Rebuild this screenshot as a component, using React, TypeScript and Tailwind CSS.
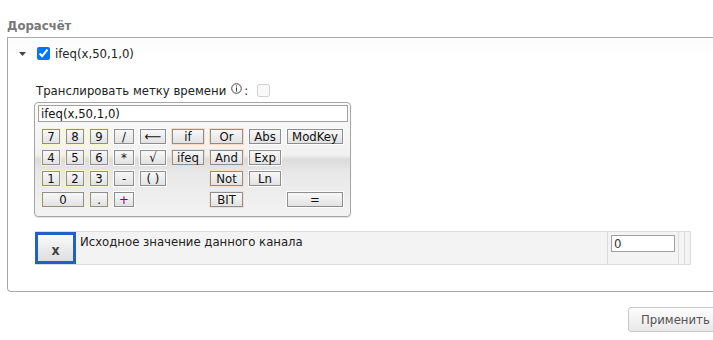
import React from "react";

const FONT = { fontFamily: '"DejaVu Sans Condensed", "Liberation Sans", Arial, sans-serif' };

type Frame = "y" | "p" | "w";

function Btn({
  label,
  frame,
  pos,
  textCls = "text-[#111]",
}: {
  label: string;
  frame: Frame;
  pos: string;
  textCls?: string;
}) {
  const frameCls =
    frame === "y" ? "bg-[#fbf5c6]" : frame === "p" ? "bg-[#f9dcc4]" : "bg-[#fdfdfd]";
  return (
    <div className={`${pos} ${frameCls} p-px h-[17px]`}>
      <div
        className={`h-full border border-[#8e8e8e] bg-gradient-to-b from-[#f8f8f8] to-[#e2e2e2] flex items-center justify-center text-[13px] leading-none ${textCls}`}
      >
        {label}
      </div>
    </div>
  );
}

export default function App() {
  return (
    <div style={FONT} className="w-[713px] h-[340px] bg-white overflow-hidden text-[13px] text-[#222]">
      <div className="pt-[18px] pl-[7px] h-[33px] leading-[15px] font-bold text-[#777]">Дорасчёт</div>
      <div className="ml-[7px] mt-[4px] w-[720px] border-l border-t border-b border-[#a9a9a9] rounded-bl-[4px] bg-gradient-to-b from-[#fbfbfb] to-white to-[20px]">
        {/* row 1 */}
        <div className="mt-[7px] h-[17px] flex items-center">
          <svg width="7" height="4" viewBox="0 0 7 4" className="ml-[11px]">
            <path d="M0 0 L7 0 L3.5 4 Z" fill="#444" />
          </svg>
          <input type="checkbox" defaultChecked className="ml-[11px] m-0 w-[13px] h-[13px] accent-[#0075ff]" />
          <span className="ml-[5px] leading-[17px]">ifeq(x,50,1,0)</span>
        </div>
        {/* row 2 */}
        <div className="mt-[20px] h-[17px] flex items-center pl-[28px]">
          <span className="leading-[17px]">Транслировать метку времени</span>
          <svg width="11" height="11" viewBox="0 0 11 11" className="ml-[5px] -mt-[5px]">
            <circle cx="5.5" cy="5.5" r="4.8" fill="none" stroke="#333" strokeWidth="0.9" />
            <rect x="5" y="2.4" width="1" height="1.1" fill="#333" />
            <rect x="5" y="4.4" width="1" height="4.2" fill="#333" />
          </svg>
          <span className="ml-[2px]">:</span>
          <input type="checkbox" disabled className="ml-[9px] m-0 w-[13px] h-[13px]" />
        </div>
        {/* calculator */}
        <div className="mt-[3px] ml-[26px] w-[317px] h-[115px] border border-[#a6a6a6] rounded-[4px] pl-[3px] pt-[2px] bg-[linear-gradient(to_bottom,#fbfbfb_0%,#f1f1f1_46%,#dcdcdc_50%,#e8e8e8_62%,#f3f3f3_100%)] shadow-[0_1px_1px_rgba(0,0,0,0.12)]">
          <div className="w-[310px] h-[17px] border border-[#a0a0a0] bg-white pl-[2px] leading-[15px] text-[13px] text-[#111]">
            ifeq(x,50,1,0)
          </div>
          <div className="mt-[6px] ml-[3px] grid grid-cols-[20px_20px_20px_22px_28px_34px_35px_34px_58px] grid-rows-[17px_17px_17px_17px] gap-x-[4px] gap-y-[4px]">
            <Btn label="7" frame="y" pos="col-start-1 row-start-1" />
            <Btn label="8" frame="y" pos="col-start-2 row-start-1" />
            <Btn label="9" frame="y" pos="col-start-3 row-start-1" />
            <Btn label="/" frame="w" pos="col-start-4 row-start-1" />
            <Btn label="⟵" frame="w" pos="col-start-5 row-start-1" />
            <Btn label="if" frame="p" pos="col-start-6 row-start-1" />
            <Btn label="Or" frame="p" pos="col-start-7 row-start-1" />
            <Btn label="Abs" frame="w" pos="col-start-8 row-start-1" />
            <Btn label="ModKey" frame="w" pos="col-start-9 row-start-1" />

            <Btn label="4" frame="y" pos="col-start-1 row-start-2" />
            <Btn label="5" frame="y" pos="col-start-2 row-start-2" />
            <Btn label="6" frame="y" pos="col-start-3 row-start-2" />
            <Btn label="*" frame="w" pos="col-start-4 row-start-2" />
            <Btn label="√" frame="w" pos="col-start-5 row-start-2" />
            <Btn label="ifeq" frame="p" pos="col-start-6 row-start-2" />
            <Btn label="And" frame="p" pos="col-start-7 row-start-2" />
            <Btn label="Exp" frame="w" pos="col-start-8 row-start-2" />

            <Btn label="1" frame="y" pos="col-start-1 row-start-3" />
            <Btn label="2" frame="y" pos="col-start-2 row-start-3" />
            <Btn label="3" frame="y" pos="col-start-3 row-start-3" />
            <Btn label="-" frame="w" pos="col-start-4 row-start-3" />
            <Btn label="( )" frame="w" pos="col-start-5 row-start-3" />
            <Btn label="Not" frame="p" pos="col-start-7 row-start-3" />
            <Btn label="Ln" frame="w" pos="col-start-8 row-start-3" />

            <Btn label="0" frame="y" pos="col-start-1 col-span-2 row-start-4" />
            <Btn label="." frame="y" pos="col-start-3 row-start-4" />
            <Btn label="+" frame="w" pos="col-start-4 row-start-4" textCls="text-[#800080]" />
            <Btn label="BIT" frame="p" pos="col-start-7 row-start-4" />
            <Btn label="=" frame="w" pos="col-start-9 row-start-4" />
          </div>
        </div>
        {/* source row */}
        <div className="mt-[14px] ml-[27px] w-[656px] h-[34px] flex bg-[#f3f3f3] border-t border-b border-r border-[#dcdcdc]">
          <div className="w-[41px] h-full border-[3px] border-[#2160c4] bg-gradient-to-b from-[#fafafa] to-[#dedede] flex items-center justify-center pt-[3px]">
            <span className="font-bold text-[14px] text-[#444] leading-none">x</span>
          </div>
          <div className="w-[531px] pl-[4px] pt-[1px] leading-[17px] text-[#222]">Исходное значение данного канала</div>
          <div className="w-[71px] border-l border-[#dcdcdc] pl-[3px] pt-[3px]">
            <div className="w-[64px] h-[17px] border border-[#a0a0a0] bg-white pl-[2px] leading-[15px] text-[#333]">0</div>
          </div>
          <div className="w-[6px] border-l border-[#dcdcdc]" />
          <div className="w-[6px] border-l border-[#dcdcdc]" />
        </div>
        <div className="h-[26px]" />
      </div>
      <div className="mt-[15px] ml-[628px] w-[92px] h-[25px] border border-[#c8c8c8] rounded-[3px] bg-gradient-to-b from-[#fdfdfd] to-[#e8e8e8] pl-[12px] leading-[23px] text-[#555]">
        Применить
      </div>
    </div>
  );
}
